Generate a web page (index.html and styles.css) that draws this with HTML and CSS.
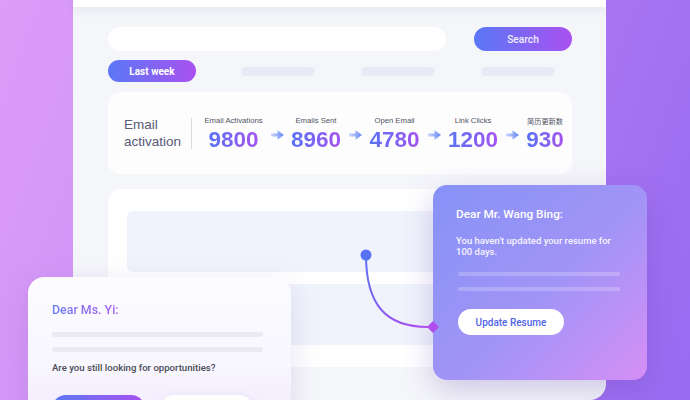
FILE: index.html
```html
<!DOCTYPE html>
<html lang="en">
<head>
<meta charset="utf-8">
<title>Email activation</title>
<link rel="stylesheet" href="styles.css">
</head>
<body>
<div class="stage">
  <div class="panel">
    <div class="topbar"></div>
    <div class="search-row">
      <div class="search-input"></div>
      <div class="btn-grad search-btn">Search</div>
    </div>
    <div class="filter-row">
      <div class="btn-grad pill-week">Last week</div>
      <span class="ph"></span>
      <span class="ph"></span>
      <span class="ph"></span>
    </div>
    <div class="stats-card">
      <div class="stats-title">Email<br>activation</div>
      <div class="divider"></div>
      <div class="stat s1"><span class="label">Email Activations</span><span class="num">9800</span></div>
      <svg class="arrow" viewBox="0 0 13 10"><defs><linearGradient id="ag1" x1="0" x2="1" y1="0" y2="0"><stop offset="0" stop-color="#cbd7fc"/><stop offset="1" stop-color="#6788f5"/></linearGradient></defs><path d="M0 3.5H6.5V0.3L13 5L6.5 9.7V6.5H0Z" fill="url(#ag1)"/></svg>
      <div class="stat s2"><span class="label">Emails Sent</span><span class="num">8960</span></div>
      <svg class="arrow" viewBox="0 0 13 10"><path d="M0 3.5H6.5V0.3L13 5L6.5 9.7V6.5H0Z" fill="url(#ag1)"/></svg>
      <div class="stat s3"><span class="label">Open Email</span><span class="num">4780</span></div>
      <svg class="arrow" viewBox="0 0 13 10"><path d="M0 3.5H6.5V0.3L13 5L6.5 9.7V6.5H0Z" fill="url(#ag1)"/></svg>
      <div class="stat s4"><span class="label">Link Clicks</span><span class="num">1200</span></div>
      <svg class="arrow" viewBox="0 0 13 10"><path d="M0 3.5H6.5V0.3L13 5L6.5 9.7V6.5H0Z" fill="url(#ag1)"/></svg>
      <div class="stat s5"><span class="label cjk">简历更新数</span><span class="num">930</span></div>
    </div>
    <div class="list-card">
      <div class="list-row"></div>
      <div class="list-row"></div>
    </div>
  </div>

  <div class="card card-yi">
    <div class="yi-title">Dear Ms. Yi:</div>
    <div class="yi-line"></div>
    <div class="yi-line"></div>
    <div class="yi-text">Are you still looking for opportunities?</div>
    <div class="yi-buttons">
      <div class="btn-grad yi-btn"></div>
      <div class="yi-btn yi-btn-white"></div>
    </div>
  </div>

  <div class="card card-wang">
    <div class="wang-title">Dear Mr. Wang Bing:</div>
    <div class="wang-text">You haven't updated your resume for<br>100 days.</div>
    <div class="wang-line"></div>
    <div class="wang-line"></div>
    <div class="wang-btn">Update Resume</div>
  </div>

  <svg class="connector" viewBox="0 0 690 400">
    <defs>
      <linearGradient id="cg" gradientUnits="userSpaceOnUse" x1="366" y1="255" x2="430" y2="327">
        <stop offset="0" stop-color="#5872f4"/>
        <stop offset="1" stop-color="#b24dec"/>
      </linearGradient>
    </defs>
    <path d="M366 255C366 305 386 327 428 327" fill="none" stroke="url(#cg)" stroke-width="2"/>
    <circle cx="366" cy="255" r="5.5" fill="#5872f4"/>
    <polygon points="433,321 439,327 433,333 427,327" fill="#b24ded"/>
  </svg>
</div>
</body>
</html>
```

FILE: styles.css
```css
* { box-sizing: border-box; margin: 0; padding: 0; }
html, body { width: 690px; height: 400px; overflow: hidden; }
body { font-family: Roboto, "Liberation Sans", sans-serif; }

.stage {
  position: relative;
  width: 690px;
  height: 400px;
  overflow: hidden;
  background: linear-gradient(110deg, #dc9cf8 0%, #d094f6 30%, #ab77f3 68%, #986bf1 100%);
}

.panel {
  margin-left: 73px;
  width: 533px;
  height: 400px;
  background: #f5f6fa;
  border-radius: 0 0 16px 16px;
  display: flex;
  flex-direction: column;
  padding: 0 34px 0 35px;
}
.topbar {
  height: 7px;
  margin: 0 -34px 0 -35px;
  background: #fff;
  box-shadow: 0 3px 8px rgba(130, 130, 200, 0.14);
}

.search-row { display: flex; gap: 28px; margin-top: 20px; height: 24px; }
.search-input { flex: 1; background: #fff; border-radius: 12px; }
.btn-grad {
  background: linear-gradient(90deg, #5a78f6, #a951f0);
  color: #fff;
  border-radius: 999px;
  display: flex;
  align-items: center;
  justify-content: center;
}
.search-btn { width: 98px; font-size: 10.2px; font-weight: 500; color: #eceeff; }

.filter-row { display: flex; align-items: center; gap: 46px; margin-top: 9px; height: 22px; }
.pill-week { width: 88px; height: 22px; font-size: 10px; font-weight: 700; margin-right: -1px; }
.ph { width: 74px; height: 9px; border-radius: 5px; background: #e8eaf5; }

.stats-card {
  margin-top: 10px;
  height: 82px;
  background: #fdfdfe;
  border-radius: 12px;
  display: flex;
  align-items: center;
  padding-left: 16px;
  font-family: "Liberation Sans", Arial, sans-serif;
}
.stats-title { width: 57px; font-size: 13.5px; line-height: 17px; color: #585a76; white-space: nowrap; }
.divider { width: 1px; height: 31px; background: #d9dae2; margin: 0 13px 0 10px; }
.stat { display: flex; flex-direction: column; align-items: center; white-space: nowrap; }
.s1 { width: 57px; }
.s2 { width: 48px; }
.s3 { width: 49px; }
.s4 { width: 48px; }
.s5 { width: 36px; }
.label { font-size: 7.7px; line-height: 10px; color: #50535f; margin-bottom: 3px; }
.cjk { font-family: "Noto Sans CJK SC", sans-serif; font-size: 7.2px; }
.num {
  display: inline-block;
  font-size: 22.5px;
  font-weight: 700;
  line-height: 22px;
  background: linear-gradient(90deg, #5673f5, #a653ef);
  -webkit-background-clip: text;
  background-clip: text;
  color: transparent;
}
.arrow { width: 13px; height: 10px; margin: 3px 8px 0 9px; flex: none; }

.list-card {
  margin-top: 15px;
  height: 178px;
  background: #fff;
  border-radius: 14px;
  padding: 22px 19px;
  display: flex;
  flex-direction: column;
  gap: 12px;
}
.list-row { height: 61px; background: #f0f3fc; border-radius: 6px; }

.card { position: absolute; }

.card-yi {
  left: 28px;
  top: 277px;
  width: 263px;
  height: 150px;
  border-radius: 16px;
  background: linear-gradient(180deg, #fcfcff 0%, #f8f6fe 60%, #f1e8fd 100%);
  box-shadow: 0 8px 30px rgba(110, 90, 170, 0.18);
  padding: 22px 28px 0 24px;
}
.yi-title {
  display: inline-block;
  font-size: 12.4px;
  font-weight: 500;
  line-height: 16px;
  background: linear-gradient(90deg, #6b7df6, #a85cf0);
  -webkit-background-clip: text;
  background-clip: text;
  color: transparent;
}
.yi-line { height: 5px; border-radius: 3px; background: #e9eaf2; margin-top: 10px; }
.yi-title + .yi-line { margin-top: 14px; }
.yi-text { font-size: 9.6px; font-weight: 500; line-height: 12px; color: #4a4b58; margin-top: 10px; white-space: nowrap; }
.yi-buttons { display: flex; gap: 15px; margin-top: 21px; }
.yi-btn { width: 93px; height: 28px; border-radius: 14px; }
.yi-btn-white { background: #fff; box-shadow: 0 2px 8px rgba(120, 110, 170, 0.14); }

.card-wang {
  left: 433px;
  top: 185px;
  width: 214px;
  height: 195px;
  border-radius: 14px;
  background: linear-gradient(135deg, #8692f7 0%, #a294f6 55%, #d68ff6 100%);
  box-shadow: 0 10px 30px rgba(90, 60, 170, 0.25);
  padding: 22px 27px 0 23px;
  color: #fff;
}
.wang-title { font-size: 11.8px; font-weight: 500; line-height: 15px; }
.wang-text { font-size: 9.5px; font-weight: 500; line-height: 11px; margin-top: 13px; color: #f6f3ff; white-space: nowrap; }
.wang-line { height: 4px; border-radius: 2px; background: rgba(255, 255, 255, 0.22); margin: 11px 0 0 2px; }
.wang-text + .wang-line { margin-top: 15px; }
.wang-btn {
  width: 106px;
  height: 26px;
  margin: 18px 0 0 2px;
  border-radius: 13px;
  background: #fff;
  color: #5063e6;
  font-size: 10px;
  font-weight: 500;
  display: flex;
  align-items: center;
  justify-content: center;
}

.connector { position: absolute; left: 0; top: 0; width: 690px; height: 400px; pointer-events: none; }
```
